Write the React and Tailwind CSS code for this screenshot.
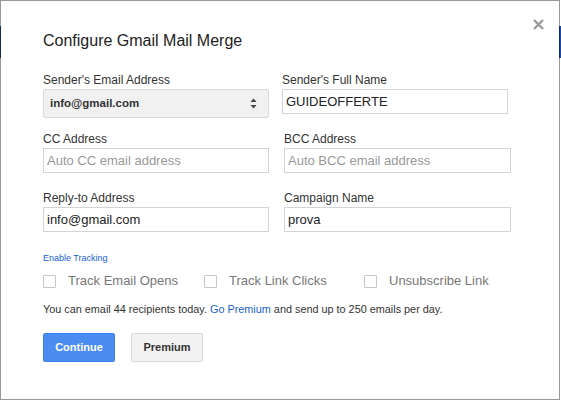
import React from 'react';

const font = { fontFamily: '"Liberation Sans", Arial, sans-serif' };

const Label = ({ children }) => (
  <div className="text-[12px] leading-[14px] text-[#333] mb-[2px]">{children}</div>
);

const TextInput = ({ value, placeholder }) => (
  <div className="h-[25px] border border-[#d4d4d4] bg-white flex items-center px-[3px] text-[13px]">
    {value ? (
      <span className="text-[#222]">{value}</span>
    ) : (
      <span className="text-[#999]">{placeholder}</span>
    )}
  </div>
);

const Checkbox = ({ label, width }) => (
  <div className={`flex items-center ${width}`}>
    <span className="w-[13px] h-[13px] border border-[#c6c6c6] rounded-[1px] bg-white shrink-0" />
    <span className="ml-[12px] text-[13px] leading-[16px] text-[#777]">{label}</span>
  </div>
);

const SelectArrows = () => (
  <svg width="7" height="11" viewBox="0 0 7 11" className="shrink-0">
    <path d="M3.5 0.5 L6.5 4 L0.5 4 Z" fill="#444" />
    <path d="M3.5 10.5 L6.5 7 L0.5 7 Z" fill="#444" />
  </svg>
);

export default function App() {
  return (
    <div className="relative w-[561px] h-[402px] bg-white overflow-hidden" style={font}>
      {/* page behind the modal */}
      <div className="absolute left-0 right-0 top-[26px] h-[32px] bg-[#1b4aa6]" />

      {/* modal */}
      <div className="absolute left-0 top-0 w-[560px] h-[400px] border border-black/40 bg-white bg-clip-padding">
        <button className="absolute left-[531px] top-[17px] w-[12px] h-[12px] flex items-center justify-center">
          <svg width="11" height="11" viewBox="0 0 11 11">
            <path d="M1 1 L10 10 M10 1 L1 10" stroke="#9a9a9a" strokeWidth="2.4" />
          </svg>
        </button>

        <div className="pl-[42px] pt-[30px]">
          <h2 className="text-[16px] leading-[20px] text-[#222] font-normal">
            Configure Gmail Mail Merge
          </h2>

          {/* sender row */}
          <div className="flex mt-[22px]">
            <div className="w-[226px]">
              <Label>Sender's Email Address</Label>
              <div className="h-[29px] border border-[#dadada] bg-[#f1f1f1] rounded-[2px] flex items-center justify-between pl-[6px] pr-[11px]">
                <span className="text-[11.5px] font-bold text-[#333]">info@gmail.com</span>
                <SelectArrows />
              </div>
            </div>
            <div className="w-[226px] ml-[13px]">
              <Label>Sender's Full Name</Label>
              <TextInput value="GUIDEOFFERTE" />
            </div>
          </div>

          {/* cc / bcc */}
          <div className="flex mt-[14px]">
            <div className="w-[226px]">
              <Label>CC Address</Label>
              <TextInput placeholder="Auto CC email address" />
            </div>
            <div className="w-[227px] ml-[15px]">
              <Label>BCC Address</Label>
              <TextInput placeholder="Auto BCC email address" />
            </div>
          </div>

          {/* reply-to / campaign */}
          <div className="flex mt-[18px]">
            <div className="w-[226px]">
              <Label>Reply-to Address</Label>
              <TextInput value="info@gmail.com" />
            </div>
            <div className="w-[227px] ml-[15px]">
              <Label>Campaign Name</Label>
              <TextInput value="prova" />
            </div>
          </div>

          <div className="mt-[20px] text-[9px] leading-[12px] text-[#1a62d6]">Enable Tracking</div>

          <div className="flex mt-[9px]">
            <Checkbox label="Track Email Opens" width="w-[161px]" />
            <Checkbox label="Track Link Clicks" width="w-[160px]" />
            <Checkbox label="Unsubscribe Link" width="w-[160px]" />
          </div>

          <p className="mt-[13px] text-[10.85px] leading-[14px] text-[#333]">
            You can email 44 recipients today.{' '}
            <span className="text-[#1a62d6]">Go Premium</span> and send up to 250 emails per day.
          </p>

          <div className="flex mt-[17px] gap-[16px]">
            <button className="w-[72px] h-[29px] rounded-[2px] border border-[#3f82ee] bg-[#4a8cf2] text-white text-[11px] font-bold">
              Continue
            </button>
            <button className="w-[72px] h-[29px] rounded-[2px] border border-[#d9d9d9] bg-[#f2f2f2] text-[#333] text-[11px] font-bold">
              Premium
            </button>
          </div>
        </div>
      </div>
    </div>
  );
}
